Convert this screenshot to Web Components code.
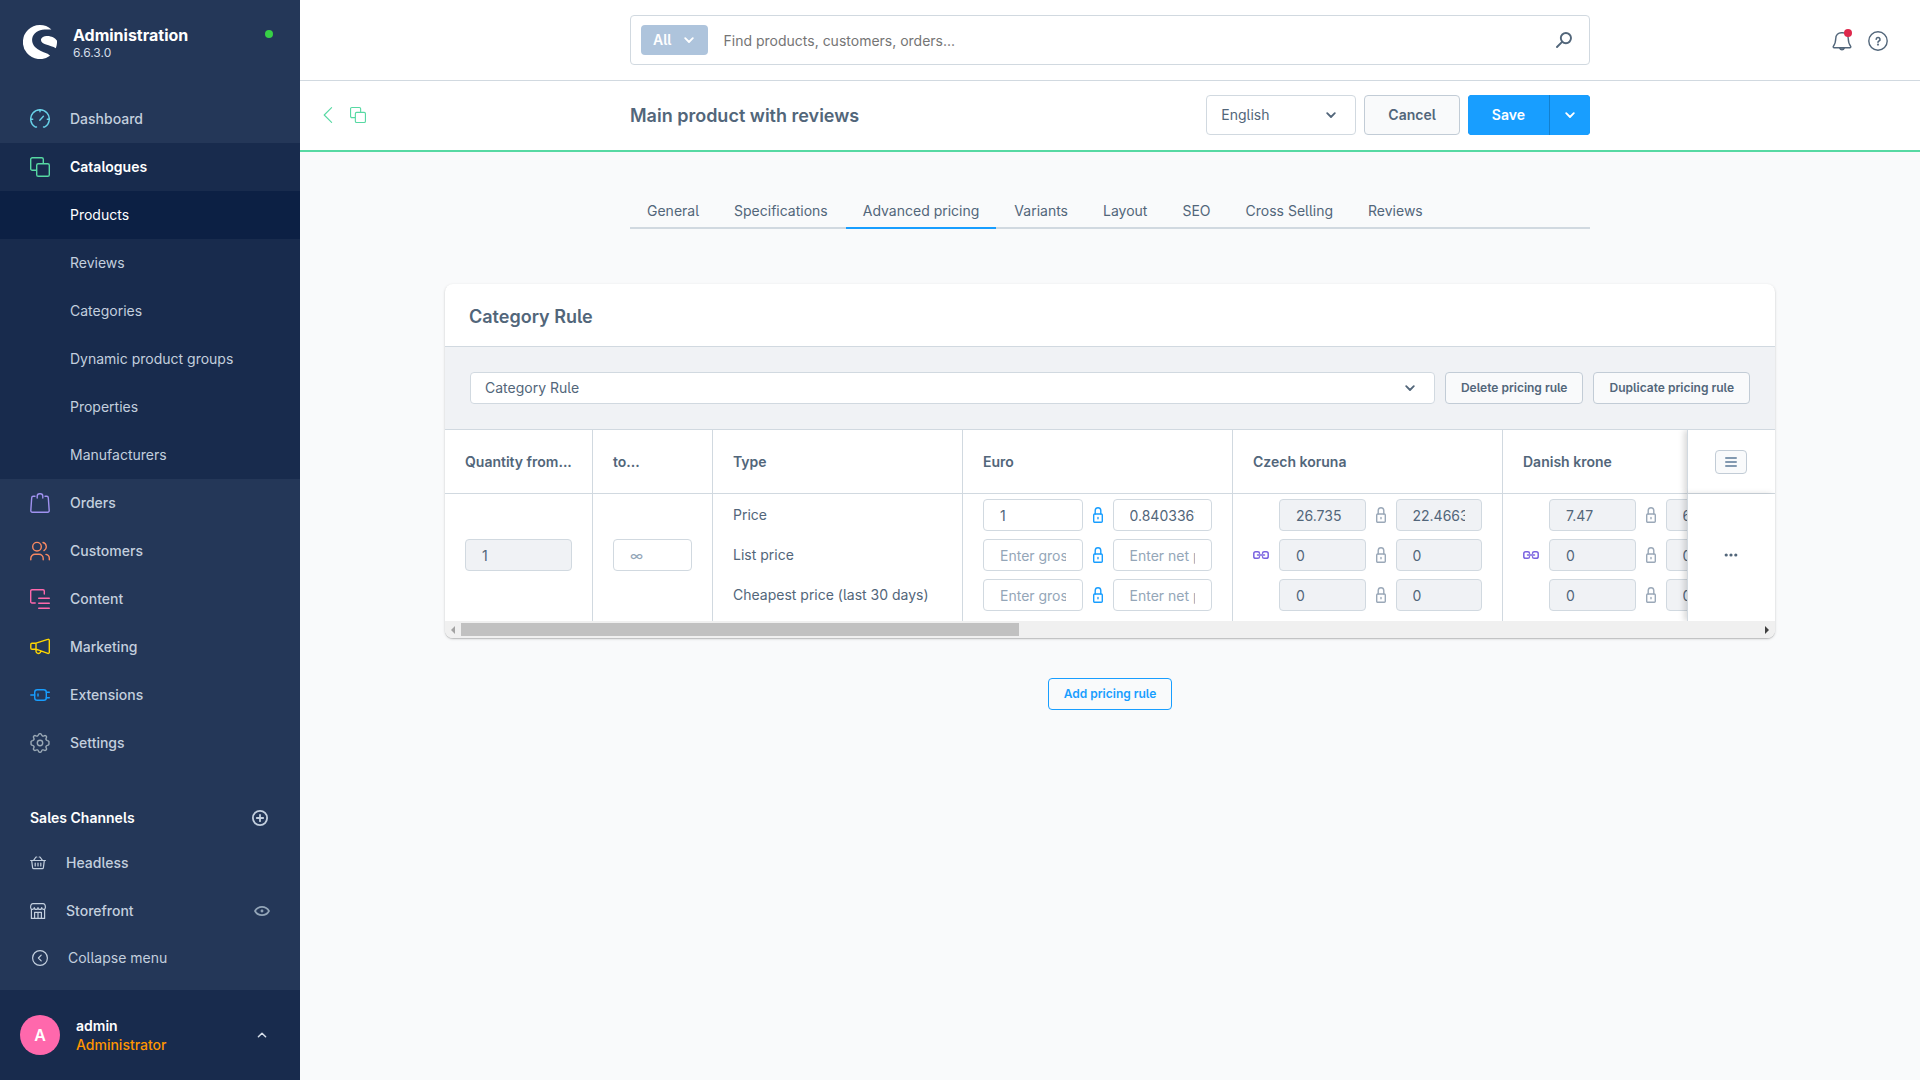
<!DOCTYPE html>
<html lang="en">
<head>
<meta charset="utf-8">
<title>Main product with reviews | Administration</title>
<style>
  html, body { margin: 0; height: 100%; }
  body {
    font-family: Inter, "Liberation Sans", sans-serif;
    font-size: 14px;
    line-height: 20px;
    font-feature-settings: "cv05";
    color: #52667a;
    background: #f9fafb;
    --line: #d1d9e0;
    --brand: #189eff;
    --green: #57d9a3;
  }
</style>
</head>
<body>
<admin-app></admin-app>

<script>
const BASE = `
  *, *::before, *::after { box-sizing: border-box; }
  :host { display: block; }
  :host([hidden]) { display: none; }
  button, input, select { font: inherit; font-feature-settings: inherit; color: inherit; margin: 0; }
  button { cursor: pointer; }
  a { color: inherit; text-decoration: none; }
`;

function define(name, css, html, setup) {
  const tpl = document.createElement('template');
  tpl.innerHTML = `<style>${BASE}${css}</style>${html}`;
  customElements.define(name, class extends HTMLElement {
    connectedCallback() {
      if (this.shadowRoot) return;
      const root = this.attachShadow({ mode: 'open' });
      root.append(tpl.content.cloneNode(true));
      if (setup) setup.call(this, root);
    }
  });
}

/* ---------- icons ---------- */
const S = (w, d) => `<g fill="none" stroke="currentColor" stroke-width="${w}" stroke-linecap="round" stroke-linejoin="round">${d}</g>`;
const ICONS = {
  logo: ['0 0 34 34', `<path fill="currentColor" d="M28.4 4.6A17 17 0 1 0 27 30.8c-.3-.6-1.600-1.500-3-2.200-4.500-1.800-9.200-3.600-12-6.700-2.200-2.400-3.400-5.600-2.700-8.800C10.300 8.200 15.500 4.700 21.500 4.500c2.800-.1 5.200.2 6.900.1z"/><path fill="currentColor" d="M33.900 15.500c-1.600-2.700-5.600-4.500-9.300-4.600-3.300-.1-6.300 1.400-6.600 3.600-.3 2.300 2 3.900 5 5 3.300 1.200 7.200 2 9.800 3.700.8-1.900 1.500-5 1.100-7.700z"/>`],
  dashboard: ['0 0 20 20', S(1.4, `<path d="M6.500 18H5.200A9.300 9.300 0 1 1 14.800 18h-1.300M10 .8v1.900M.8 10.300h1.900M17.300 10.300h1.900M9.800 11.200l3.600-4"/>`)],
  copy: ['0 0 20 20', S(1.4, `<path d="M6 13.300H2.300A1.600 1.600 0 0 1 .7 11.700V2.300A1.600 1.600 0 0 1 2.300.7h9.400a1.600 1.600 0 0 1 1.600 1.600V6"/><rect x="6.700" y="6.700" width="12.600" height="12.600" rx="1.600"/>`)],
  bag: ['0 0 20 20', S(1.4, `<path d="M5 3.300H3.200A1.500 1.500 0 0 0 1.700 4.700L.8 17.700a1.500 1.500 0 0 0 1.500 1.600h15.400a1.500 1.500 0 0 0 1.500-1.600l-.9-13a1.500 1.500 0 0 0-1.500-1.400H15M7.200 5V3.200a2.400 2.400 0 0 1 2.400-2.400h.8a2.400 2.400 0 0 1 2.400 2.400V5"/>`)],
  users: ['0 0 20 20', S(1.4, `<circle cx="7" cy="5.700" r="4.300"/><path d="M13 1.500a4.400 4.400 0 0 1 1 8.100M.8 18.700v-1.200a4.200 4.200 0 0 1 4.200-4.200h4a4.200 4.200 0 0 1 4.200 4.200v1.200M16 13.400a4 4 0 0 1 3.300 4v1.300"/>`)],
  content: ['0 0 20 20', S(1.4, `<path d="M5.200 14H2A1.300 1.300 0 0 1 .7 12.700V2A1.300 1.300 0 0 1 2 .7h11A1.300 1.300 0 0 1 14.300 2v3M8.700 9.300h10.600M8.700 14.300h10.600M8.700 19.300h10.600"/>`)],
  megaphone: ['0 0 20 20', S(1.4, `<path d="M6 6.200 17.800 2.400a1.100 1.100 0 0 1 1.500 1v12a1.100 1.100 0 0 1-1.500 1L6 12.200M6 6.200H2A1.200 1.200 0 0 0 .8 7.400V11A1.200 1.200 0 0 0 2 12.200h4zM6 12.200v2a2.400 2.400 0 0 0 4.400 1.200l.4-1.200"/>`)],
  plug: ['0 0 20 20', S(1.4, `<rect x="4.700" y="4.700" width="11.600" height="10.600" rx="2.600"/><path d="M.8 10h3.900M8 9v2M16.300 7.300h3M16.300 12.700h3"/>`)],
  gear: ['0 0 20 20', S(1.4, `<circle cx="10" cy="10" r="2.700"/><path d="M8.500 1.700a1.600 1.600 0 0 1 3 0c.3 1.300 1.400 1.800 2.600 1.100a1.600 1.600 0 0 1 2.200 2.200c-.8 1.200-.2 2.300 1.100 2.600a1.600 1.600 0 0 1 1.400 2.400 1.600 1.600 0 0 1-1.400 2.400c-1.300.3-1.900 1.400-1.100 2.600a1.600 1.600 0 0 1-2.200 2.200c-1.200-.8-2.300-.2-2.600 1.100a1.600 1.600 0 0 1-3 0c-.3-1.300-1.400-1.900-2.600-1.100A1.600 1.600 0 0 1 3.700 15c.8-1.200.2-2.300-1.100-2.600a1.600 1.600 0 0 1-1.400-2.400 1.600 1.600 0 0 1 1.400-2.400C3.900 7.300 4.500 6.200 3.700 5a1.600 1.600 0 0 1 2.200-2.200c1.200.7 2.300.2 2.600-1.100z"/>`)],
  'plus-circle': ['0 0 16 16', S(1.8, `<circle cx="8" cy="8" r="7.100"/><path d="M8 4.800v6.400M4.800 8h6.400"/>`)],
  basket: ['0 0 16 16', S(1.2, `<path d="M.6 5.500h14.800M1.700 5.600l.9 7a1.200 1.200 0 0 0 1.200 1h8.400a1.200 1.200 0 0 0 1.200-1l.9-7M3.600 5.300 6 2h.8M12.400 5.300 10 2h-.8M5.200 8v3M8 8v3M10.800 8v3"/>`)],
  store: ['0 0 16 16', S(1.2, `<path d="M1.400 6.500v8.900h13.200V6.500M.6 4.500C.6 2 1.500.6 3 .6h10c1.500 0 2.400 1.400 2.400 3.900 0 2.400-3.600 2.600-3.700 0 0 2.600-3.700 2.600-3.700 0 0 2.600-3.700 2.600-3.700 0-.1 2.600-3.700 2.400-3.700 0zM4.600 15.400V9.300h6.800v6.100M8 9.300v6.100"/>`)],
  'back-circle': ['0 0 16 16', S(1.2, `<circle cx="8" cy="8" r="7.400"/><path d="M9.200 5.200 6.400 8l2.800 2.800"/>`)],
  eye: ['0 0 16 16', S(1.7, `<path d="M1 8C2.700 5 5.100 3.800 8 3.800S13.300 5 15 8c-1.700 3-4.100 4.200-7 4.200S2.700 11 1 8z"/><circle cx="8" cy="8" r=".6" fill="currentColor"/>`)],
  up: ['0 0 10 10', S(1.5, `<path d="M1.400 6.800 5 3.200l3.600 3.600"/>`)],
  down: ['0 0 10 10', S(1.8, `<path d="M1.200 3.200 5 7l3.800-3.800"/>`)],
  back: ['0 0 10 16', S(1.1, `<path d="M8.600.6 1.200 8l7.400 7.400"/>`)],
  search: ['0 0 16 16', S(1.9, `<circle cx="9.900" cy="6.100" r="5.100"/><path d="M6.100 9.900 1 15"/>`)],
  bell: ['0 0 20 20', S(1.4, `<path d="M1.900 16.700h16.200c.8 0 .9-.9.500-1.400-1.700-2.100-2.200-3.800-2.400-8A5.500 5.500 0 0 0 10.600 1.700H9.400A5.500 5.500 0 0 0 3.800 7.300c-.2 4.200-.7 5.900-2.400 8-.4.500-.3 1.400.5 1.400z"/><path d="M7.800 17.200a2.300 2.300 0 0 0 4.400 0" fill="currentColor"/>`)],
  help: ['0 0 20 20', S(1.4, `<circle cx="10" cy="10" r="9.200"/><path d="M8.200 8.300a1.900 1.900 0 1 1 2.700 1.800c-.6.300-.9.600-.9 1.200" stroke-width="1.600"/><circle cx="10" cy="13.600" r=".4" fill="currentColor"/>`)],
  lock: ['0 0 10 16', S(1.4, `<rect x=".7" y="7" width="8.600" height="8.300" rx="1"/><path d="M2.200 7V3.500A2.800 2.800 0 0 1 5 .8a2.800 2.800 0 0 1 2.800 2.700V7M5 10.500v1.200"/>`)],
  link: ['0 0 16 10', S(1.5, `<path d="M6.500 3.300A1.700 1.700 0 0 0 4.800 1.700H2.700A1.900 1.900 0 0 0 .8 3.600v2.800a1.900 1.900 0 0 0 1.900 1.900h2.100a1.700 1.700 0 0 0 1.700-1.600M9.500 3.300a1.700 1.700 0 0 1 1.700-1.600h2.100a1.900 1.900 0 0 1 1.900 1.900v2.800a1.900 1.900 0 0 1-1.900 1.900h-2.100a1.700 1.700 0 0 1-1.700-1.600M4.500 5h7"/>`)],
  menu: ['0 0 12 10', S(2, `<path d="M1 1h10M1 5h10M1 9h10"/>`)],
  dots: ['0 0 14 4', `<g fill="currentColor"><circle cx="2.200" cy="2" r="1.600"/><circle cx="7" cy="2" r="1.600"/><circle cx="11.800" cy="2" r="1.600"/></g>`],
};
define('ui-icon', `
  :host { display: inline-block; flex: none; line-height: 0; }
  svg { display: block; }
`, ``, function (root) {
  const [box, body] = ICONS[this.getAttribute('name')];
  const [, , w, h] = box.split(' ').map(Number);
  const width = Number(this.getAttribute('size')) || w;
  const holder = document.createElement('template');
  holder.innerHTML = `<svg viewBox="${box}" width="${width}" height="${width * h / w}" aria-hidden="true">${body}</svg>`;
  root.append(holder.content);
});

/* ---------- general controls ---------- */
define('ui-button', `
  :host { display: inline-block; flex: none; }
  button {
    height: 40px; padding: 0 23px; border: 1px solid #c2ccd6; border-radius: 4px;
    background: #f9fafb; font-weight: 600; white-space: nowrap; display: block;
  }
  :host([small]) button { height: 32px; padding: 0 15px; font-size: 12px; }
  :host([ghost]) button { border-color: var(--brand); color: var(--brand); background: transparent; }
`, `<button type="button"><slot></slot></button>`);

define('ui-select', `
  :host { min-width: 0; }
  label { display: grid; align-items: center; }
  select, ui-icon { grid-area: 1 / 1; }
  select {
    appearance: none; width: 100%; height: 40px; padding: 0 14px; border: 1px solid var(--line);
    border-radius: 4px; background: #fff;
  }
  :host([small]) select { height: 32px; }
  ui-icon { justify-self: end; margin-right: 20px; pointer-events: none; }
`, `<label><select></select><ui-icon name="down"></ui-icon></label>`, function (root) {
  const select = root.querySelector('select');
  select.setAttribute('aria-label', this.getAttribute('label'));
  select.add(new Option(this.getAttribute('value')));
});

define('ui-number', `
  :host { min-width: 0; }
  input {
    display: block; width: 100%; height: 32px; padding: 0 16px; border: 1px solid var(--line);
    border-radius: 4px; background: #fff; outline: 0;
  }
  input::placeholder { color: #94a6b8; opacity: 1; }
  input:disabled { background: #f0f2f5; color: #52667a; opacity: 1; }
`, `<input type="text">`, function (root) {
  const input = root.querySelector('input');
  input.value = this.getAttribute('value') || '';
  input.placeholder = this.getAttribute('placeholder') || '';
  input.disabled = this.hasAttribute('disabled');
  input.setAttribute('aria-label', this.getAttribute('label'));
});

/* ---------- sidebar ---------- */
define('nav-item', `
  a {
    display: flex; align-items: center; gap: 20px; height: 48px; padding: 0 30px;
    color: #c3cfde; font-weight: 500;
  }
  ui-icon { color: var(--tint, inherit); }
  .end { margin-left: auto; display: flex; }
  :host([sub]) a { padding-left: 70px; font-weight: 400; }
  :host([open]) a { color: #fff; font-weight: 600; }
  :host([active]) a { color: #fff; background: #0c2044; }
`, `<a href="#"><slot></slot><span class="end"><slot name="end"></slot></span></a>`, function (root) {
  const icon = this.getAttribute('icon');
  if (!icon) return;
  const el = document.createElement('ui-icon');
  el.setAttribute('name', icon);
  if (this.hasAttribute('tint')) this.style.setProperty('--tint', this.getAttribute('tint'));
  root.querySelector('a').prepend(el);
});

define('side-bar', `
  :host { display: flex; flex-direction: column; min-height: 100vh; background: #243758; color: #fff; }
  header { display: flex; gap: 16px; padding: 25px 27px 0 23px; height: 95px; }
  header div { flex: 1; }
  strong { display: block; font-size: 16px; line-height: 20px; font-weight: 700; }
  small { display: block; font-size: 12px; line-height: 16px; color: #d5dde8; }
  .dot { width: 8px; height: 8px; margin-top: 5px; border-radius: 50%; background: #37d046; }
  .group { background: #182b4d; }
  .channels { padding-top: 30px; flex: 1; }
  .head { display: flex; align-items: center; justify-content: space-between; padding: 0 32px 0 30px; height: 42px; }
  h2 { margin: 0; font-size: 14px; line-height: 20px; font-weight: 600; }
  .head button { display: flex; padding: 0; border: 0; background: none; color: #c3cfde; }
  .collapse { display: flex; align-items: center; gap: 20px; height: 46px; padding: 0 32px; border: 0; background: none; color: #c3cfde; }
  footer { display: flex; align-items: center; gap: 16px; height: 90px; padding: 0 33px 0 20px; background: #182b4d; }
  .avatar { width: 40px; height: 40px; border-radius: 50%; background: #ff68ac; display: grid; place-items: center; font-weight: 600; font-size: 16px; }
  .who { flex: 1; line-height: 19px; }
  .who b { display: block; font-weight: 600; }
  .who span { color: #ff9500; font-weight: 500; }
  .up { color: #d5dde8; }
`, `
  <header>
    <ui-icon name="logo"></ui-icon>
    <div><strong>Administration</strong><small>6.6.3.0</small></div>
    <span class="dot"></span>
  </header>
  <nav>
    <nav-item icon="dashboard" tint="#68d1e8">Dashboard</nav-item>
    <div class="group">
      <nav-item icon="copy" tint="#57d9a3" open>Catalogues</nav-item>
      <nav-item sub active>Products</nav-item>
      <nav-item sub>Reviews</nav-item>
      <nav-item sub>Categories</nav-item>
      <nav-item sub>Dynamic product groups</nav-item>
      <nav-item sub>Properties</nav-item>
      <nav-item sub>Manufacturers</nav-item>
    </div>
    <nav-item icon="bag" tint="#a092f0">Orders</nav-item>
    <nav-item icon="users" tint="#f88962">Customers</nav-item>
    <nav-item icon="content" tint="#ff68ac">Content</nav-item>
    <nav-item icon="megaphone" tint="#ffd700">Marketing</nav-item>
    <nav-item icon="plug" tint="#189eff">Extensions</nav-item>
    <nav-item icon="gear" tint="#9aa8b5">Settings</nav-item>
  </nav>
  <section class="channels">
    <div class="head">
      <h2>Sales Channels</h2>
      <button type="button" aria-label="Add sales channel"><ui-icon name="plus-circle"></ui-icon></button>
    </div>
    <nav-item icon="basket">Headless</nav-item>
    <nav-item icon="store">Storefront<ui-icon slot="end" name="eye" style="color:#94a6b8"></ui-icon></nav-item>
    <button type="button" class="collapse"><ui-icon name="back-circle"></ui-icon>Collapse menu</button>
  </section>
  <footer>
    <span class="avatar">A</span>
    <div class="who"><b>admin</b><span>Administrator</span></div>
    <ui-icon class="up" name="up"></ui-icon>
  </footer>
`);

/* ---------- top bars ---------- */
const COLUMNS = `display: grid; grid-template-columns: 1fr minmax(0, 960px) 1fr; align-items: center;`;

define('top-bar', `
  :host { ${COLUMNS} height: 81px; background: #fff; border-bottom: 1px solid var(--line); }
  form { grid-column: 2; display: flex; align-items: center; height: 50px; border: 1px solid var(--line); border-radius: 4px; padding: 0 17px 0 10px; }
  .scope { display: flex; align-items: center; gap: 12px; height: 30px; padding: 0 14px 0 12px; border: 0; border-radius: 4px; background: #aec4dc; color: #fff; font-weight: 600; }
  input { flex: 1; min-width: 0; height: 48px; padding: 0 16px; border: 0; outline: 0; background: none; }
  input::placeholder { color: #757575; opacity: 1; }
  .find, .tools button { display: flex; padding: 0; border: 0; background: none; }
  .tools { justify-self: end; display: flex; gap: 16px; padding: 2px 32px 0 0; }
  .bell { position: relative; }
  .bell span { position: absolute; top: -2px; right: 0; width: 8px; height: 8px; border-radius: 50%; background: #de294c; }
`, `
  <form role="search">
    <button type="button" class="scope">All<ui-icon name="down"></ui-icon></button>
    <input type="text" placeholder="Find products, customers, orders..." aria-label="Search">
    <button type="button" class="find" aria-label="Search"><ui-icon name="search"></ui-icon></button>
  </form>
  <div class="tools">
    <button type="button" class="bell" aria-label="Notifications"><ui-icon name="bell"></ui-icon><span></span></button>
    <button type="button" aria-label="Help"><ui-icon name="help"></ui-icon></button>
  </div>
`);

define('page-head', `
  :host { ${COLUMNS} height: 71px; padding-bottom: 2px; background: #fff; border-bottom: 2px solid var(--green); }
  .nav { display: flex; align-items: center; gap: 17px; padding-left: 23px; color: var(--green); }
  .nav a { display: flex; }
  .main { display: flex; align-items: center; gap: 8px; }
  h1 { flex: 1; margin: 0; padding-top: 2px; font-size: 18px; line-height: 24px; font-weight: 600; }
  ui-select { width: 150px; }
  .save { display: flex; gap: 1px; background: #1280d0; border-radius: 4px; overflow: hidden; }
  .save button { height: 40px; padding: 0 24px; border: 0; background: var(--brand); color: #fff; font-weight: 600; }
  .save .more { padding: 0 15px; display: flex; align-items: center; }
`, `
  <div class="nav">
    <a href="#" aria-label="Back"><ui-icon name="back"></ui-icon></a>
    <ui-icon name="copy" size="16"></ui-icon>
  </div>
  <div class="main">
    <h1>Main product with reviews</h1>
    <ui-select label="Language" value="English"></ui-select>
    <ui-button>Cancel</ui-button>
    <div class="save">
      <button type="button">Save</button>
      <button type="button" class="more" aria-label="More save options"><ui-icon name="down"></ui-icon></button>
    </div>
  </div>
`);

define('tab-bar', `
  nav { display: flex; gap: 1px; border-bottom: 2px solid var(--line); }
  ::slotted(a) { padding: 8px 17px 6px; margin-bottom: -2px; border-bottom: 2px solid transparent; color: #52667a; text-decoration: none; }
  ::slotted(a[aria-current]) { color: #1f262e; border-color: var(--brand); }
`, `<nav><slot></slot></nav>`);

/* ---------- pricing card ---------- */
define('price-row', `
  :host { display: flex; align-items: center; }
  ui-number { flex: 1; }
  .link { display: flex; width: 26px; color: #7a63e0; }
  .lock { display: flex; justify-content: center; width: 30px; color: #9aa8b8; }
  :host([editable]) .lock { color: var(--brand); }
`, ``, function (root) {
  const editable = this.hasAttribute('editable');
  const field = (key, hint) => `<ui-number label="${key} price" value="${this.getAttribute(key) || ''}" placeholder="${hint}" ${editable ? '' : 'disabled'}></ui-number>`;
  const holder = document.createElement('template');
  holder.innerHTML = `
    ${editable ? '' : `<span class="link">${this.hasAttribute('linked') ? '<ui-icon name="link"></ui-icon>' : ''}</span>`}
    ${field('gross', editable ? 'Enter gross price' : '')}
    <span class="lock"><ui-icon name="lock"></ui-icon></span>
    ${field('net', editable ? 'Enter net price' : '')}`;
  root.append(holder.content);
});

define('pricing-table', `
  :host { overflow: hidden; }
  table { width: 100%; min-width: 1416px; table-layout: fixed; border-collapse: separate; border-spacing: 0; }
  th, td { padding: 0 20px; border-right: 1px solid var(--line); text-align: left; }
  th { height: 64px; border-bottom: 1px solid var(--line); font-weight: 600; }
  td { height: 127px; padding-bottom: 5px; }
  .stack { display: grid; gap: 8px; }
  .stack span { line-height: 32px; }
  .fixed { position: sticky; right: 0; padding-left: 0; padding-right: 2px; background: #fff; border-right: 0; border-left: 1px solid var(--line); text-align: center; box-shadow: -3px 0 6px rgba(0, 0, 0, .15); }
  .fixed button { display: inline-flex; align-items: center; justify-content: center; width: 32px; height: 24px; padding: 0; border: 1px solid #c2ccd6; border-radius: 4px; background: #f9fafb; vertical-align: middle; }
  th.fixed button { color: #8299b0; }
  .fixed button.plain { border-color: transparent; background: none; }
`, `
  <table>
    <colgroup>
      <col style="width:148px"><col style="width:120px"><col style="width:250px">
      <col style="width:270px"><col style="width:270px"><col style="width:270px"><col style="width:88px">
    </colgroup>
    <thead>
      <tr><th>Quantity from...</th><th>to...</th><th>Type</th><th>Euro</th><th>Czech koruna</th><th>Danish krone</th>
      <th class="fixed"><button type="button" aria-label="Columns"><ui-icon name="menu"></ui-icon></button></th></tr>
    </thead>
    <tbody>
      <tr>
        <td><ui-number label="Quantity from" value="1" disabled></ui-number></td>
        <td><ui-number label="Quantity to" placeholder="∞"></ui-number></td>
        <td><div class="stack"><span>Price</span><span>List price</span><span>Cheapest price (last 30 days)</span></div></td>
        <td><div class="stack">
          <price-row editable gross="1" net="0.8403361"></price-row>
          <price-row editable></price-row>
          <price-row editable></price-row>
        </div></td>
        <td><div class="stack">
          <price-row gross="26.735" net="22.4663"></price-row>
          <price-row gross="0" net="0" linked></price-row>
          <price-row gross="0" net="0"></price-row>
        </div></td>
        <td><div class="stack">
          <price-row gross="7.47" net="6"></price-row>
          <price-row gross="0" net="0" linked></price-row>
          <price-row gross="0" net="0"></price-row>
        </div></td>
        <td class="fixed"><button type="button" class="plain" aria-label="Row actions"><ui-icon name="dots"></ui-icon></button></td>
      </tr>
    </tbody>
  </table>
`);

define('scroll-track', `
  :host { display: flex; align-items: center; height: 17px; background: #f0f0f0; }
  i { flex: none; width: 16px; height: 17px; display: grid; place-items: center; }
  i::before { content: ""; border: 4px solid transparent; }
  .left::before { border-left-width: 0; border-right-color: #a3a3a3; }
  .right::before { border-right-width: 0; border-left-color: #404040; }
  .rail { flex: 1; }
  .thumb { width: 43%; height: 13px; background: #c1c1c1; }
`, `<i class="left"></i><div class="rail"><div class="thumb"></div></div><i class="right"></i>`);

define('pricing-card', `
  :host { border-radius: 8px; background: #fff; overflow: hidden; box-shadow: 0 1px 3px rgba(0, 0, 0, .16), 0 1px 1px rgba(0, 0, 0, .14); }
  header { height: 63px; padding: 4px 24px 0; display: flex; align-items: center; border-bottom: 1px solid var(--line); }
  h2 { margin: 0; font-size: 18px; line-height: 24px; font-weight: 600; }
  .tools { display: flex; gap: 10px; padding: 25px; background: #f0f2f5; border-bottom: 1px solid var(--line); }
  ui-select { flex: 1; }
`, `
  <header><h2>Category Rule</h2></header>
  <div class="tools">
    <ui-select small label="Rule" value="Category Rule"></ui-select>
    <ui-button small>Delete pricing rule</ui-button>
    <ui-button small>Duplicate pricing rule</ui-button>
  </div>
  <pricing-table></pricing-table>
  <scroll-track></scroll-track>
`);

/* ---------- app ---------- */
define('admin-app', `
  :host { display: grid; grid-template-columns: 300px minmax(0, 1fr); min-height: 100vh; }
  tab-bar { max-width: 960px; margin: 41px auto 0; }
  pricing-card { max-width: 1330px; margin: 55px auto 0; }
  .add { display: flex; justify-content: center; padding: 40px 0; }
`, `
  <side-bar></side-bar>
  <div>
    <top-bar></top-bar>
    <page-head></page-head>
    <main>
      <tab-bar>
        <a href="#">General</a><a href="#">Specifications</a><a href="#" aria-current="page">Advanced pricing</a><a href="#">Variants</a><a href="#">Layout</a><a href="#">SEO</a><a href="#">Cross Selling</a><a href="#">Reviews</a>
      </tab-bar>
      <pricing-card></pricing-card>
      <div class="add"><ui-button small ghost>Add pricing rule</ui-button></div>
    </main>
  </div>
`);
</script>
</body>
</html>
